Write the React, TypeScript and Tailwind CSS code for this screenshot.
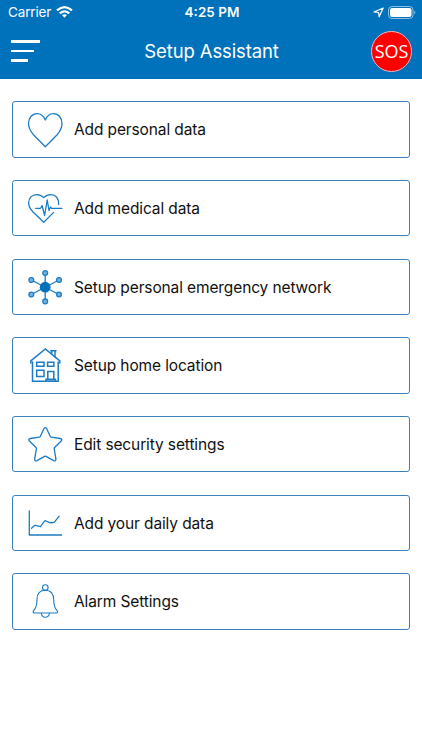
import type { ReactNode } from "react";

function Icon({ children }: { children: ReactNode }) {
  return (
    <svg
      viewBox="0 0 40 40"
      className="w-10 h-10 shrink-0"
      fill="none"
      stroke="#1c7cc4"
      strokeWidth="1.3"
      strokeLinecap="round"
      strokeLinejoin="round"
    >
      {children}
    </svg>
  );
}

const items = [
  {
    label: "Add personal data",
    icon: (
      <path d="M20.3 10C18.5 6 15.7 3.7 12.2 3.7C7 3.7 3.5 7.8 3.5 13.6C3.5 18.5 5.3 21.3 8.7 25L20.3 36.8L31.9 25C35.3 21.3 37 18.5 37 13.6C37 7.8 33.5 3.7 28.4 3.7C24.8 3.7 22 6 20.3 10Z" />
    ),
  },
  {
    label: "Add medical data",
    icon: (
      <>
        <path d="M33.7 16.5C34 10.3 30.7 6.6 26 6.6C22.8 6.6 20.5 7.8 18.7 9.6C16.9 7.8 14.6 6.6 11.5 6.6C7 6.6 3.6 10 3.6 15C3.6 18.4 5.3 21 8 24L18.7 34.2L28.7 24.4" />
        <path d="M10.7 20.3H15.6L17.1 17.5L19.6 27.5L22.2 12L24 22.5L25.5 19L26.6 20.3H37" />
      </>
    ),
  },
  {
    label: "Setup personal emergency network",
    icon: (
      <>
        <path d="M20.2 6V34.5M6.3 13L34 27.5M34 13L6.3 27.5" />
        <circle cx="20.2" cy="20.2" r="5.4" fill="#0072bc" stroke="none" />
        <g fill="#75b3dd">
          <circle cx="20.2" cy="6" r="2.4" />
          <circle cx="20.2" cy="34.4" r="2.4" />
          <circle cx="6.3" cy="13" r="2.4" />
          <circle cx="34" cy="13" r="2.4" />
          <circle cx="6.3" cy="27.5" r="2.4" />
          <circle cx="34" cy="27.5" r="2.4" />
        </g>
      </>
    ),
  },
  {
    label: "Setup home location",
    icon: (
      <g strokeLinejoin="miter" strokeWidth="1.5">
        <path d="M5.8 18V15.9L20.3 4L34.8 15.9V18M7.5 17V36.2H33.2V17" />
        <path d="M26.7 8.5V6M30 12V6M25.7 5.7H31" />
        <path d="M11.7 17.3H19V21.3H11.7ZM22.6 17.3H28.9V21.3H22.6ZM11.7 25.2H19V31.4H11.7Z" />
        <path d="M22.8 34.2V26.5H28.8V34.2M21 34.3H30.4V36.2H21Z" />
      </g>
    ),
  },
  {
    label: "Edit security settings",
    icon: (
      <path d="M19 4.5Q20.3 2.6 21.6 4.5L25.3 12.5Q25.6 13.1 26.3 13.2L35.2 14.5Q37.9 15 36.2 17L29.6 23.5Q29.1 24 29.2 24.7L30.9 34.8Q31.1 37.7 28.6 36.6L21 32.4Q20.3 32 19.6 32.4L12 36.6Q9.4 37.7 9.7 34.8L11.4 24.7Q11.5 24 11 23.5L4.4 17Q2.7 15 5.4 14.5L14.3 13.2Q15 13.1 15.3 12.5Z" />
    ),
  },
  {
    label: "Add your daily data",
    icon: (
      <>
        <path d="M4.3 7.8V32H36.6" />
        <path d="M6.5 25.3L9.5 22.6Q10.5 22 11.7 22.6L15.5 23.6L19.3 18.3Q20.2 17.2 21.5 18.2Q25 20.6 29.2 19.3L34.2 13.2" />
      </>
    ),
  },
  {
    label: "Alarm Settings",
    icon: (
      <g strokeWidth="1.1">
        <circle cx="20.3" cy="6.5" r="2.8" />
        <path d="M20.3 9.3C14.7 9.3 12 13.2 12 18.5C12 24 11.2 26.9 8.8 29.4C7.7 30.7 7.9 32 9.5 32H31.2C32.8 32 33 30.7 31.9 29.4C29.5 26.9 28.7 24 28.7 18.5C28.7 13.2 25.9 9.3 20.3 9.3Z" />
        <path d="M16.3 32.2C16.7 37.5 24 37.5 24.4 32.2" />
      </g>
    ),
  },
];

function StatusBar() {
  return (
    <div className="grid grid-cols-3 items-center h-6 pl-2 pr-[6px]">
      <div className="flex items-center gap-[5px]">
        <span className="text-[13.5px] tracking-[-0.15px]">Carrier</span>
        <svg viewBox="0 0 17 12" className="w-[17px] h-3" fill="none" stroke="white" strokeWidth="2.2">
          <path d="M1 4.4Q8.5 -2.1 16 4.4" />
          <path d="M3.7 7.4Q8.5 3.2 13.3 7.4" />
          <path d="M6 9.1Q8.5 7.3 11 9.1L8.5 11.7Z" fill="white" stroke="none" />
        </svg>
      </div>
      <span className="text-center text-[13.5px] font-semibold">4:25 PM</span>
      <div className="flex items-center justify-end gap-[4px]">
        <svg viewBox="0 0 11 11" className="w-[11px] h-[11px]" fill="none" stroke="white" strokeWidth="1.2" strokeLinejoin="round">
          <path d="M10.2 1L6.1 9.8L5.6 5.5L1 5Z" />
        </svg>
        <svg viewBox="0 0 28 13" className="w-7 h-[13px]">
          <rect x="0.5" y="0.5" width="24.5" height="12" rx="3.5" fill="none" stroke="#8bbfe2" />
          <rect x="2" y="2" width="21.5" height="9" rx="2.2" fill="white" />
          <path d="M26.3 4.5Q28.5 6.5 26.3 8.5Z" fill="#8bbfe2" />
        </svg>
      </div>
    </div>
  );
}

function Header() {
  return (
    <header className="h-[79px] bg-[#0072bc] text-white">
      <StatusBar />
      <div className="grid grid-cols-[1fr_auto_1fr] items-center h-[54px] pl-[11px] pr-[10px]">
        <button aria-label="Menu" className="flex flex-col gap-[7px]">
          <span className="w-[29px] h-[2.5px] bg-white" />
          <span className="w-[22.5px] h-[2.5px] bg-white" />
          <span className="w-[17px] h-[2.5px] bg-white" />
        </button>
        <h1 className="pt-px text-[18.5px] tracking-[-0.12px]">Setup Assistant</h1>
        <button className="justify-self-end w-[41px] h-[41px] rounded-full border border-[#f3b5c0] bg-[#ff0000] font-['Open_Sans',sans-serif] text-[18px] leading-none">
          SOS
        </button>
      </div>
    </header>
  );
}

export default function App() {
  return (
    <div className="min-h-[750px] bg-white font-[Inter,sans-serif]">
      <Header />
      <main className="flex flex-col gap-[22.15px] px-3 pt-[22.3px]">
        {items.map((item) => (
          <button
            key={item.label}
            className="flex items-center h-[56.5px] w-full pl-3 gap-[9px] border border-[#3c80bd] rounded-[3px] text-left text-[15.5px] text-[#111111]"
          >
            <Icon>{item.icon}</Icon>
            <span className="pt-px tracking-[-0.12px]">{item.label}</span>
          </button>
        ))}
      </main>
    </div>
  );
}
